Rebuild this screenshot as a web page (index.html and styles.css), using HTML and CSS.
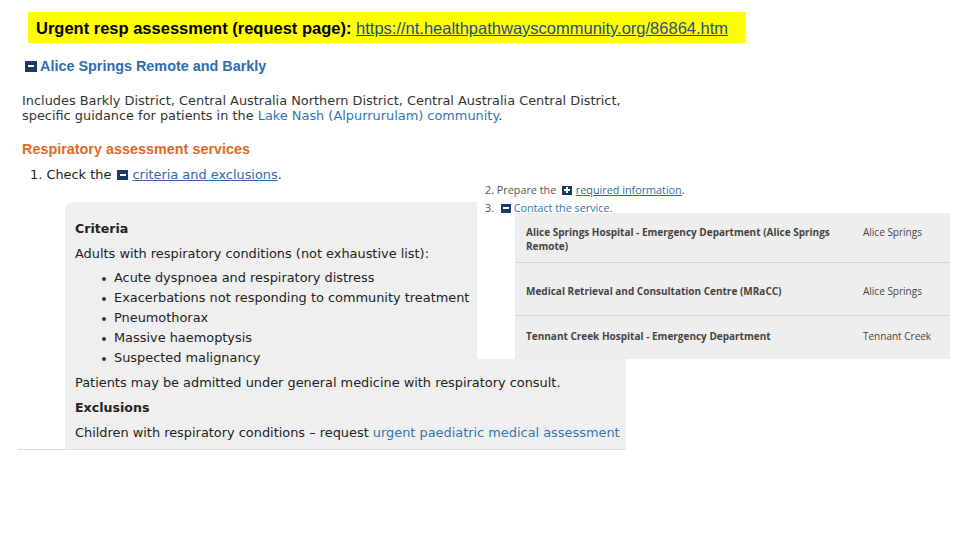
FILE: index.html
```html
<!DOCTYPE html>
<html>
<head>
<meta charset="utf-8">
<link rel="stylesheet" href="styles.css">
</head>
<body>
<div class="slide">
  <div class="banner"><b>Urgent resp assessment (request page):</b> <a href="#" class="banner-link">https://nt.healthpathwayscommunity.org/86864.htm</a></div>

  <div class="shot-left">
    <h2 class="region"><span class="tog"><span class="bar"></span></span>Alice Springs Remote and Barkly</h2>
    <p class="intro">Includes Barkly District, Central Australia Northern District, Central Australia Central District,<br>specific guidance for patients in the <a href="#" class="plain-link">Lake Nash (Alpurrurulam) community</a>.</p>
    <h3 class="services">Respiratory assessment services</h3>
    <ol class="steps">
      <li>Check the <span class="tog small"><span class="bar"></span></span> <a href="#" class="u-link">criteria and exclusions</a>.</li>
    </ol>
    <div class="panel-wrap">
      <div class="panel">
        <div class="p-head">Criteria</div>
        <div class="p-line">Adults with respiratory conditions (not exhaustive list):</div>
        <ul class="p-list">
          <li>Acute dyspnoea and respiratory distress</li>
          <li>Exacerbations not responding to community treatment</li>
          <li>Pneumothorax</li>
          <li>Massive haemoptysis</li>
          <li>Suspected malignancy</li>
        </ul>
        <div class="p-line">Patients may be admitted under general medicine with respiratory consult.</div>
        <div class="p-head">Exclusions</div>
        <div class="p-line">Children with respiratory conditions – request <a href="#" class="plain-link">urgent paediatric medical assessment</a></div>
      </div>
    </div>
  </div>

  <div class="shot-right">
    <ol class="steps2" start="2">
      <li>Prepare the <span class="tog tiny plus"><span class="bar"></span><span class="vbar"></span></span> <a href="#" class="u-link">required information</a>.</li>
      <li><span class="tog tiny minus"><span class="bar"></span></span> <a href="#" class="plain-link">Contact the service</a>.</li>
    </ol>
    <div class="svc-table">
      <div class="svc-row r1">
        <div class="svc-name">Alice Springs Hospital - Emergency Department (Alice Springs<br>Remote)</div>
        <div class="svc-loc">Alice Springs</div>
      </div>
      <div class="svc-row r2">
        <div class="svc-name">Medical Retrieval and Consultation Centre (MRaCC)</div>
        <div class="svc-loc">Alice Springs</div>
      </div>
      <div class="svc-row r3">
        <div class="svc-name">Tennant Creek Hospital - Emergency Department</div>
        <div class="svc-loc">Tennant Creek</div>
      </div>
    </div>
  </div>
</div>
</body>
</html>
```

FILE: styles.css
```css
* { box-sizing: border-box; }
html, body { margin: 0; padding: 0; background: #fff; }
.slide {
  position: relative;
  width: 960px;
  height: 540px;
  overflow: hidden;
  padding-top: 12px;
}
.banner {
  margin-left: 28px;
  width: 718px;
  height: 31px;
  background: #ffff00;
  padding-left: 8px;
  font-family: "Liberation Sans", Arial, sans-serif;
  font-size: 16.5px;
  line-height: 32px;
  color: #000;
  white-space: nowrap;
}
.banner b { font-weight: bold; }
.banner-link { color: #1f4e8c; text-decoration: underline; }

.shot-left {
  margin-left: 18px;
  margin-top: 13px;
  width: 608px;
}
.region {
  margin: 0;
  height: 20px;
  line-height: 20px;
  font-family: "Liberation Sans", Arial, sans-serif;
  font-size: 14.4px;
  font-weight: bold;
  color: #2c6db3;
  display: flex;
  align-items: center;
  padding-left: 7px;
}
.tog {
  display: inline-flex;
  align-items: center;
  justify-content: center;
  position: relative;
  width: 12px;
  height: 11px;
  background: #1a3a66;
  margin-right: 3px;
  vertical-align: middle;
}
.tog .bar { display: block; width: 6px; height: 2px; background: #fff; }
.tog .vbar { position: absolute; width: 2px; height: 6px; background: #fff; left: 4px; top: 2px; }
.tog.small { width: 11px; height: 10px; margin-right: 0; margin-left: 2px; position: relative; top: -1px; }
.tog.tiny { width: 10px; height: 9px; margin-right: 0; position: relative; top: -1px; }
.tog.tiny .bar { width: 6px; }
.tog.tiny .vbar { height: 6px; left: 4px; top: 1.5px; width: 2px; }
.tog.plus { margin-left: 3px; margin-right: 1px; }
.tog.minus { margin-left: 4px; }

.intro {
  margin: 17px 0 0 4px;
  font-family: "DejaVu Sans", Verdana, sans-serif;
  font-size: 12.9px;
  line-height: 15px;
  color: #333;
  white-space: nowrap;
}
.plain-link { color: #3273b5; text-decoration: none; }
.u-link { color: #2f6aa6; text-decoration: underline; }

.services {
  margin: 16px 0 0 4px;
  height: 20px;
  line-height: 20px;
  font-family: "Liberation Sans", Arial, sans-serif;
  font-size: 14.4px;
  font-weight: bold;
  color: #e0692a;
}
.steps {
  margin: 6px 0 0 0;
  padding-left: 12px;
  list-style-position: inside;
  font-family: "DejaVu Sans", Verdana, sans-serif;
  font-size: 12.9px;
  line-height: 20px;
  color: #222;
}
.panel-wrap {
  margin-top: 17px;
  border-bottom: 1px solid #dcdcdc;
}
.panel {
  margin-left: 47px;
  background: #efefef;
  border-top-left-radius: 8px;
  padding: 17px 0 6px 10px;
  font-family: "DejaVu Sans", Verdana, sans-serif;
  font-size: 12.9px;
  line-height: 20px;
  color: #222;
}
.p-head { font-weight: bold; font-size: 12.6px; }
.p-line { margin-top: 5px; white-space: nowrap; }
.p-line + .p-head { margin-top: 5px; }
.p-list {
  margin: 4px 0 0 0;
  padding-left: 39px;
  list-style: none;
}
.p-list li { position: relative; white-space: nowrap; }
.p-list li::before {
  content: "";
  position: absolute;
  left: -12px;
  top: 9px;
  width: 4px;
  height: 4px;
  border-radius: 50%;
  background: #333;
}

.shot-right {
  position: absolute;
  left: 477px;
  top: 180px;
  width: 473px;
  height: 179px;
  background: #fff;
  font-family: "Open Sans", sans-serif;
}
.steps2 {
  margin: 0;
  height: 33px;
  padding: 3px 0 0 8px;
  list-style-position: inside;
  font-size: 10.8px;
  line-height: 14px;
  color: #555;
}
.steps2 li + li { margin-top: 4px; }
.svc-table {
  margin-left: 38px;
  background: #eeeeee;
  height: 146px;
  font-size: 10px;
  color: #444;
}
.svc-row {
  display: flex;
  border-bottom: 1px solid #d6d6d6;
  align-items: flex-start;
}
.svc-row.r1 { height: 50px; padding-top: 12px; }
.svc-row.r2 { height: 53px; padding-top: 21px; }
.svc-row.r3 { height: 43px; padding-top: 13px; border-bottom: none; }
.svc-name {
  width: 348px;
  padding-left: 11px;
  font-weight: bold;
  line-height: 14px;
  white-space: nowrap;
}
.svc-loc { line-height: 14px; white-space: nowrap; }
```
